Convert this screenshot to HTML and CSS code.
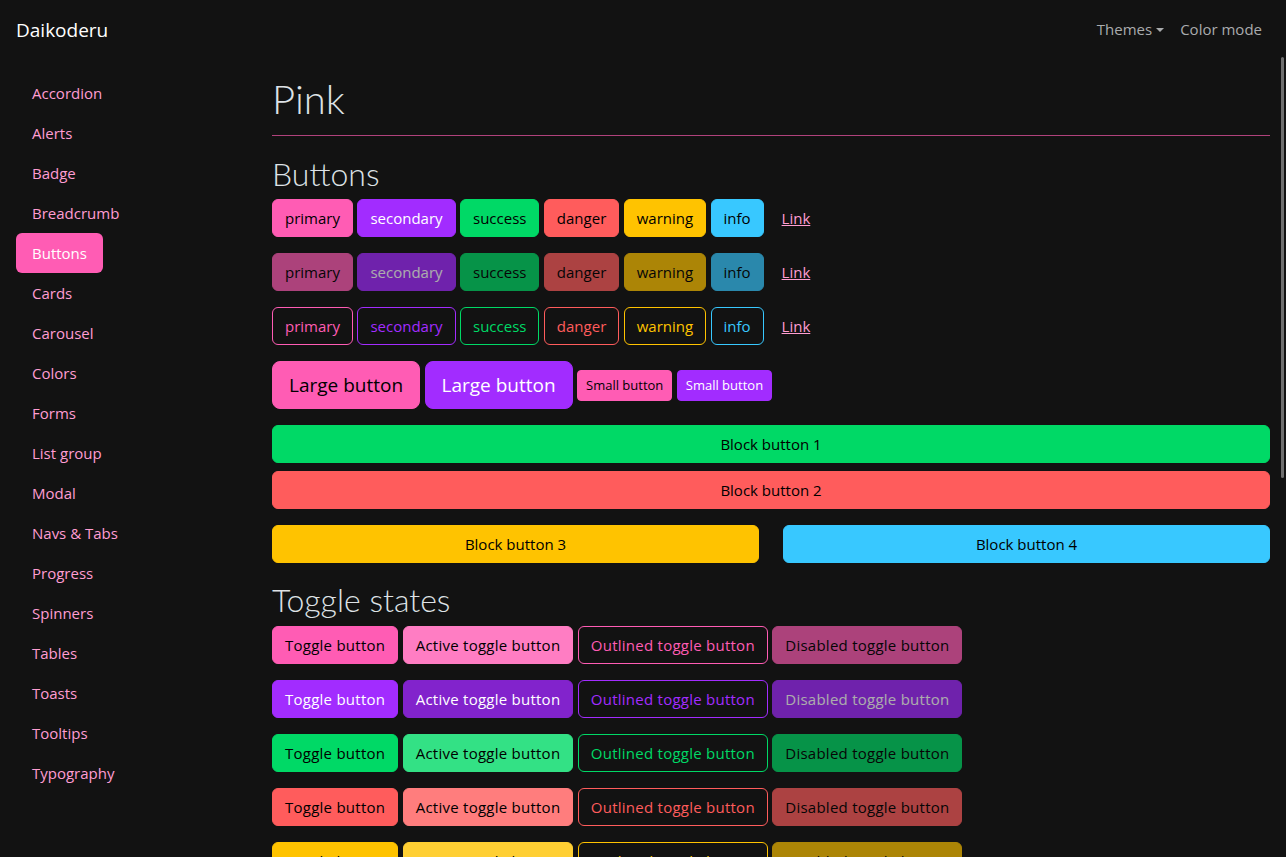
FILE: index.html
```html
<!DOCTYPE html>
<html lang="en">
<head>
<meta charset="utf-8">
<title>Daikoderu – Pink</title>
<link rel="stylesheet" href="styles.css">
</head>
<body>
<header class="navbar">
  <a class="brand" href="#">Daikoderu</a>
  <nav class="top-nav">
    <a class="top-link dropdown-toggle" href="#">Themes</a>
    <a class="top-link" href="#">Color mode</a>
  </nav>
</header>
<div class="layout">
  <aside class="sidebar">
    <nav class="side-nav">
      <a class="side-link" href="#">Accordion</a>
      <a class="side-link" href="#">Alerts</a>
      <a class="side-link" href="#">Badge</a>
      <a class="side-link" href="#">Breadcrumb</a>
      <a class="side-link active" href="#">Buttons</a>
      <a class="side-link" href="#">Cards</a>
      <a class="side-link" href="#">Carousel</a>
      <a class="side-link" href="#">Colors</a>
      <a class="side-link" href="#">Forms</a>
      <a class="side-link" href="#">List group</a>
      <a class="side-link" href="#">Modal</a>
      <a class="side-link" href="#">Navs &amp; Tabs</a>
      <a class="side-link" href="#">Progress</a>
      <a class="side-link" href="#">Spinners</a>
      <a class="side-link" href="#">Tables</a>
      <a class="side-link" href="#">Toasts</a>
      <a class="side-link" href="#">Tooltips</a>
      <a class="side-link" href="#">Typography</a>
    </nav>
  </aside>
  <main class="content">
    <div class="scroll-thumb" aria-hidden="true"></div>
    <h1 class="page-title">Pink</h1>

    <h2 class="section-title">Buttons</h2>
    <div class="btn-row">
      <button type="button" class="btn btn-primary">primary</button>
      <button type="button" class="btn btn-secondary">secondary</button>
      <button type="button" class="btn btn-success">success</button>
      <button type="button" class="btn btn-danger">danger</button>
      <button type="button" class="btn btn-warning">warning</button>
      <button type="button" class="btn btn-info">info</button>
      <button type="button" class="btn btn-link">Link</button>
    </div>
    <div class="btn-row">
      <button type="button" class="btn btn-primary" disabled>primary</button>
      <button type="button" class="btn btn-secondary" disabled>secondary</button>
      <button type="button" class="btn btn-success" disabled>success</button>
      <button type="button" class="btn btn-danger" disabled>danger</button>
      <button type="button" class="btn btn-warning" disabled>warning</button>
      <button type="button" class="btn btn-info" disabled>info</button>
      <button type="button" class="btn btn-link">Link</button>
    </div>
    <div class="btn-row">
      <button type="button" class="btn btn-outline-primary">primary</button>
      <button type="button" class="btn btn-outline-secondary">secondary</button>
      <button type="button" class="btn btn-outline-success">success</button>
      <button type="button" class="btn btn-outline-danger">danger</button>
      <button type="button" class="btn btn-outline-warning">warning</button>
      <button type="button" class="btn btn-outline-info">info</button>
      <button type="button" class="btn btn-link">Link</button>
    </div>
    <div class="btn-row">
      <button type="button" class="btn btn-lg btn-primary">Large button</button>
      <button type="button" class="btn btn-lg btn-secondary">Large button</button>
      <button type="button" class="btn btn-sm btn-primary">Small button</button>
      <button type="button" class="btn btn-sm btn-secondary">Small button</button>
    </div>
    <div class="block-stack">
      <button type="button" class="btn btn-success">Block button 1</button>
      <button type="button" class="btn btn-danger">Block button 2</button>
    </div>
    <div class="block-pair">
      <button type="button" class="btn btn-warning">Block button 3</button>
      <button type="button" class="btn btn-info">Block button 4</button>
    </div>

    <h2 class="section-title">Toggle states</h2>
    <div class="btn-row toggles">
      <button type="button" class="btn btn-primary">Toggle button</button>
      <button type="button" class="btn btn-primary active">Active toggle button</button>
      <button type="button" class="btn btn-outline-primary">Outlined toggle button</button>
      <button type="button" class="btn btn-primary" disabled>Disabled toggle button</button>
    </div>
    <div class="btn-row toggles">
      <button type="button" class="btn btn-secondary">Toggle button</button>
      <button type="button" class="btn btn-secondary active">Active toggle button</button>
      <button type="button" class="btn btn-outline-secondary">Outlined toggle button</button>
      <button type="button" class="btn btn-secondary" disabled>Disabled toggle button</button>
    </div>
    <div class="btn-row toggles">
      <button type="button" class="btn btn-success">Toggle button</button>
      <button type="button" class="btn btn-success active">Active toggle button</button>
      <button type="button" class="btn btn-outline-success">Outlined toggle button</button>
      <button type="button" class="btn btn-success" disabled>Disabled toggle button</button>
    </div>
    <div class="btn-row toggles">
      <button type="button" class="btn btn-danger">Toggle button</button>
      <button type="button" class="btn btn-danger active">Active toggle button</button>
      <button type="button" class="btn btn-outline-danger">Outlined toggle button</button>
      <button type="button" class="btn btn-danger" disabled>Disabled toggle button</button>
    </div>
    <div class="btn-row toggles">
      <button type="button" class="btn btn-warning">Toggle button</button>
      <button type="button" class="btn btn-warning active">Active toggle button</button>
      <button type="button" class="btn btn-outline-warning">Outlined toggle button</button>
      <button type="button" class="btn btn-warning" disabled>Disabled toggle button</button>
    </div>
    <div class="btn-row toggles">
      <button type="button" class="btn btn-info">Toggle button</button>
      <button type="button" class="btn btn-info active">Active toggle button</button>
      <button type="button" class="btn btn-outline-info">Outlined toggle button</button>
      <button type="button" class="btn btn-info" disabled>Disabled toggle button</button>
    </div>

    <h2 class="section-title">Button group</h2>
    <div class="btn-row">
      <div class="btn-group">
        <button type="button" class="btn btn-primary">Left</button>
        <button type="button" class="btn btn-primary">Middle</button>
        <button type="button" class="btn btn-primary">Right</button>
      </div>
    </div>
    <div class="btn-row">
      <div class="btn-group">
        <button type="button" class="btn btn-outline-primary">Left</button>
        <button type="button" class="btn btn-outline-primary">Middle</button>
        <button type="button" class="btn btn-outline-primary">Right</button>
      </div>
    </div>
  </main>
</div>
</body>
</html>
```

FILE: styles.css
```css
html, body {
  margin: 0;
  height: 100%;
}

body {
  background: #121212;
  color: #dee2e6;
  font-family: "Open Sans", "Liberation Sans", Arial, sans-serif;
  font-size: 15px;
  line-height: 1.5;
  overflow: hidden;
}

a {
  text-decoration: none;
}

/* Top navbar */
.navbar {
  height: 57px;
  box-sizing: border-box;
  padding: 0 16px;
  display: flex;
  align-items: center;
  justify-content: space-between;
}

.brand {
  color: #fff;
  font-size: 19px;
  line-height: 30px;
  padding-top: 2px;
}

.top-nav {
  display: flex;
  align-items: center;
}

.top-link {
  color: #a9abad;
  padding: 8px;
  line-height: 24px;
}

.dropdown-toggle::after {
  content: "";
  display: inline-block;
  margin-left: 4px;
  vertical-align: 3px;
  border-top: 4.8px solid;
  border-left: 4.8px solid transparent;
  border-right: 4.8px solid transparent;
}

/* Layout */
.layout {
  display: flex;
  height: calc(100vh - 57px);
}

.sidebar {
  width: 256px;
  flex: none;
  box-sizing: border-box;
  padding: 16px;
}

.side-nav {
  display: flex;
  flex-direction: column;
  align-items: flex-start;
}

.side-link {
  color: #ff9dd2;
  padding: 8px 16px;
  line-height: 24px;
  border-radius: 6px;
}

.side-link.active {
  background: #ff5cb4;
  color: #fff;
}

.content {
  flex: 1;
  min-width: 0;
  overflow-y: auto;
  box-sizing: border-box;
  padding: 16px 16px 560px 16px;
  position: relative;
}

.scroll-thumb {
  position: absolute;
  top: 0;
  right: 2px;
  width: 3px;
  height: 421px;
  border-radius: 2px;
  background: #6f6f6f;
}

/* Headings */
.page-title,
.section-title {
  font-family: Lato, "Liberation Sans", sans-serif;
  font-weight: 300;
  line-height: 1.2;
  color: #dee2e6;
}

.page-title {
  font-size: 40px;
  padding: 2px 0 12px;
  border-bottom: 1px solid #b0427c;
  margin: 0 0 17px;
}

.section-title {
  font-size: 32px;
  padding-top: 2px;
  margin: 0 0 6px;
}

/* Buttons */
.btn-row {
  display: flex;
  flex-wrap: wrap;
  align-items: center;
  gap: 4.45px;
  margin-bottom: 16px;
}

.btn {
  display: inline-block;
  font-family: inherit;
  font-size: 15px;
  line-height: 24px;
  padding: 6px 12px;
  border: 1px solid transparent;
  border-radius: 6px;
  text-align: center;
  cursor: pointer;
  background: transparent;
  color: #dee2e6;
}

.toggles .btn {
  letter-spacing: 0.25px;
}

.btn:disabled {
  opacity: 0.65;
  cursor: default;
}

.btn-lg {
  font-size: 19px;
  line-height: 30px;
  padding: 8px 16px;
  border-radius: 8px;
}

.btn-sm {
  font-size: 13px;
  line-height: 21px;
  padding: 4px 8px;
  border-radius: 4px;
}

.btn-primary { background: #ff5cb4; border-color: #ff5cb4; color: #000; }
.btn-secondary { background: #a22cff; border-color: #a22cff; color: #fff; }
.btn-success { background: #00d966; border-color: #00d966; color: #000; }
.btn-danger { background: #ff5c5c; border-color: #ff5c5c; color: #000; }
.btn-warning { background: #ffc300; border-color: #ffc300; color: #000; }
.btn-info { background: #38c8ff; border-color: #38c8ff; color: #000; }

.btn-primary.active { background: #ff7dc3; border-color: #ff7dc3; }
.btn-secondary.active { background: #8223cc; border-color: #8223cc; }
.btn-success.active { background: #33e185; border-color: #33e185; }
.btn-danger.active { background: #ff7d7d; border-color: #ff7d7d; }
.btn-warning.active { background: #ffcf33; border-color: #ffcf33; }
.btn-info.active { background: #60d3ff; border-color: #60d3ff; }

.btn-outline-primary { border-color: #ff5cb4; color: #ff5cb4; }
.btn-outline-secondary { border-color: #a22cff; color: #a22cff; }
.btn-outline-success { border-color: #00d966; color: #00d966; }
.btn-outline-danger { border-color: #ff5c5c; color: #ff5c5c; }
.btn-outline-warning { border-color: #ffc300; color: #ffc300; }
.btn-outline-info { border-color: #38c8ff; color: #38c8ff; }

.btn-link {
  color: #ff9dd2;
  text-decoration: underline;
  margin-left: 0.5px;
}

.block-stack {
  display: grid;
  gap: 8px;
  margin-bottom: 16px;
}

.block-pair {
  display: grid;
  grid-template-columns: 1fr 1fr;
  column-gap: 24px;
  margin-bottom: 16px;
}

.btn-group {
  display: inline-flex;
}

.btn-group .btn:not(:first-child) {
  border-top-left-radius: 0;
  border-bottom-left-radius: 0;
  margin-left: -1px;
}

.btn-group .btn:not(:last-child) {
  border-top-right-radius: 0;
  border-bottom-right-radius: 0;
}
```
